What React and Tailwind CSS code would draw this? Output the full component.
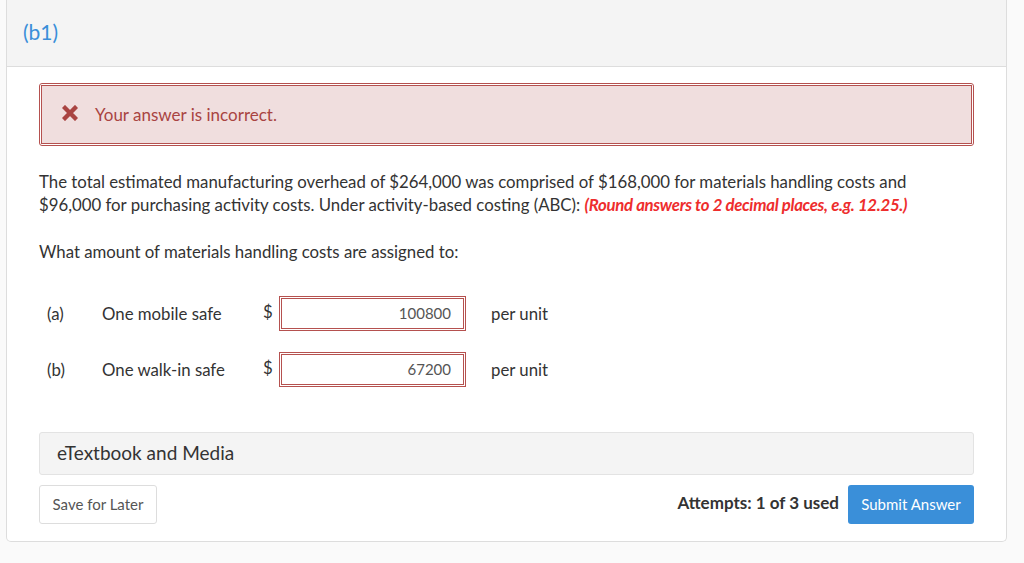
import React from 'react';

const rows = [
  { label: '(a)', name: 'One mobile safe', value: '100800' },
  { label: '(b)', name: 'One walk-in safe', value: '67200' },
];

export default function App() {
  return (
    <div className="min-h-[563px] bg-[#fafafa] pl-[6px] pr-[17px] text-[#333] font-['Lato','Liberation_Sans',sans-serif]">
      <div className="bg-white border border-t-0 border-[#ddd] rounded-b-[5px] w-[1001px]">
        {/* header */}
        <div className="h-[67px] bg-[#f4f4f4] border-b border-[#ddd] pl-[16px] pt-[16px]">
          <span className="text-[21px] text-[#3a8fd9]">(b1)</span>
        </div>

        <div className="px-[32px] pt-[16px] pb-[17px]">
          {/* alert */}
          <div className="border border-[#b5514f] rounded-[3px] p-px">
            <div className="h-[59px] bg-[#f0dede] border border-[#b5514f] flex items-center pl-[20px]">
              <svg width="16" height="16" viewBox="0 0 16 16" className="mr-[17px] -mt-[4px]">
                <path d="M3 3 L13 13 M13 3 L3 13" stroke="#a94442" strokeWidth="4.4" strokeLinecap="square" />
              </svg>
              <span className="text-[17px] text-[#a94442]">Your answer is incorrect.</span>
            </div>
          </div>

          {/* question */}
          <p className="mt-[24px] max-w-[905px] text-[16.8px] leading-[23px] text-[#333]">
            The total estimated manufacturing overhead of $264,000 was comprised of $168,000 for materials handling costs and $96,000 for purchasing activity costs. Under activity-based costing (ABC):{' '}
            <em className="font-bold text-[#ee2d2d] tracking-[-0.3px]">(Round answers to 2 decimal places, e.g. 12.25.)</em>
          </p>
          <p className="mt-[24px] text-[16.8px] leading-[23px]">What amount of materials handling costs are assigned to:</p>

          {/* inputs */}
          <div className="mt-[33px] flex flex-col gap-[21px]">
            {rows.map(r => (
              <div key={r.label} className="flex items-center h-[35px] text-[16.8px]">
                <span className="w-[63px] pl-[8px]">{r.label}</span>
                <span className="w-[161px]">{r.name}</span>
                <span className="w-[16px] -mt-[3px]">$</span>
                <div className="border border-[#b5514f] p-px w-[187px] h-[35px]">
                  <div className="border border-[#b5514f] h-full flex items-center justify-end pr-[12px] text-[15px] text-[#555]">
                    {r.value}
                  </div>
                </div>
                <span className="ml-[25px]">per unit</span>
              </div>
            ))}
          </div>

          {/* etextbook */}
          <div className="mt-[45px] h-[43px] bg-[#f4f4f4] border border-[#e3e3e3] rounded-[3px] flex items-center pl-[17px]">
            <span className="text-[19px] text-[#333]">eTextbook and Media</span>
          </div>

          {/* footer */}
          <div className="mt-[10px] flex items-center justify-between">
            <button className="h-[39px] w-[118px] border border-[#ddd] rounded-[3px] bg-white text-[15px] text-[#555]">Save for Later</button>
            <div className="flex items-center">
              <span className="text-[17px] font-bold text-[#333] mr-[9px] -mt-[3px]">Attempts: 1 of 3 used</span>
              <button className="h-[39px] w-[126px] rounded-[3px] bg-[#3a8fd9] text-white text-[15px]">Submit Answer</button>
            </div>
          </div>
        </div>
      </div>
    </div>
  );
}
